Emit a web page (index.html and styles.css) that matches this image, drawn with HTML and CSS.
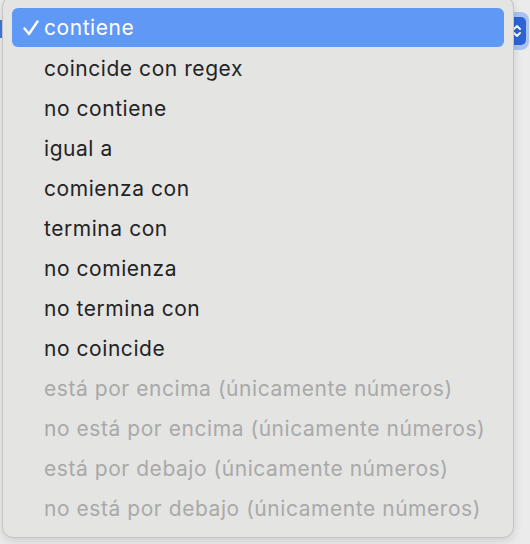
FILE: index.html
```html
<!DOCTYPE html>
<html lang="es">
<head>
<meta charset="utf-8">
<link rel="stylesheet" href="styles.css">
</head>
<body>
<div class="window">
  <div class="left-strip"><div class="left-blue"></div></div>
  <div class="spacer"></div>
  <div class="right-col">
    <div class="stepper-ring"><div class="stepper"><svg width="8" height="16" viewBox="0 0 8 16"><path d="M1 6 L4 3 L7 6 M1 10 L4 13 L7 10" fill="none" stroke="#ffffff" stroke-width="1.8" stroke-linecap="round" stroke-linejoin="round"/></svg></div></div>
    <div class="field"></div>
  </div>
</div>
<div class="menu">
  <ul class="items">
    <li class="item selected"><svg class="check" width="16" height="16" viewBox="0 0 16 16"><path d="M1.5 8.5 L6 14 L14.5 1.5" fill="none" stroke="#ffffff" stroke-width="2.4" stroke-linecap="round" stroke-linejoin="round"/></svg>contiene</li>
    <li class="item">coincide con regex</li>
    <li class="item">no contiene</li>
    <li class="item">igual a</li>
    <li class="item">comienza con</li>
    <li class="item">termina con</li>
    <li class="item">no comienza</li>
    <li class="item">no termina con</li>
    <li class="item">no coincide</li>
    <li class="item disabled">está por encima (únicamente números)</li>
    <li class="item disabled">no está por encima (únicamente números)</li>
    <li class="item disabled">está por debajo (únicamente números)</li>
    <li class="item disabled">no está por debajo (únicamente números)</li>
  </ul>
</div>
</body>
</html>
```
FILE: styles.css
```css
html, body {
  margin: 0;
  padding: 0;
  width: 530px;
  height: 544px;
  overflow: hidden;
  background: #ebebeb;
  font-family: Inter, "Noto Sans", sans-serif;
}
.window {
  display: flex;
  height: 544px;
}
.left-strip {
  width: 6px;
  padding-top: 20px;
}
.left-blue {
  width: 6px;
  height: 18px;
  background: #3f78dc;
}
.spacer { flex: 1; }
.right-col {
  width: 24px;
  padding-top: 12px;
  padding-right: 1px;
}
.stepper-ring {
  width: 24px;
  height: 38px;
  border-radius: 8px;
  background: #a9c3f0;
  display: flex;
  align-items: center;
  justify-content: flex-end;
  padding-right: 3px;
  box-sizing: border-box;
}
.stepper {
  width: 18px;
  height: 28px;
  border-radius: 5px;
  background: #2d63d5;
  display: flex;
  align-items: center;
  justify-content: center;
}
.field {
  margin-top: 3px;
  width: 7px;
  height: 64px;
  border: 1px solid #b9b9b9;
  border-left: none;
  border-top: none;
  border-radius: 0 0 5px 0;
  background: #e9e9e9;
}
.menu {
  position: absolute;
  left: 2px;
  top: -4px;
  width: 512px;
  height: 542px;
  box-sizing: border-box;
  background: #e4e4e3;
  border: 1px solid #c3c3c3;
  border-radius: 11px;
  box-shadow: 0 3px 10px rgba(0,0,0,0.12);
  padding: 11px 9px 0 9px;
}
.items {
  list-style: none;
  margin: 0;
  padding: 0;
}
.item {
  position: relative;
  height: 40px;
  line-height: 42px;
  padding-left: 32px;
  font-size: 21px;
  letter-spacing: 0.55px;
  color: #232323;
  border-radius: 6px;
  white-space: nowrap;
}
.item.selected {
  background: #5f98f5;
  color: #ffffff;
  height: 39px;
  line-height: 40px;
  margin-bottom: 1px;
}
.item.disabled {
  color: #a9a9a9;
}
.check {
  position: absolute;
  left: 11px;
  top: 12px;
}
```
